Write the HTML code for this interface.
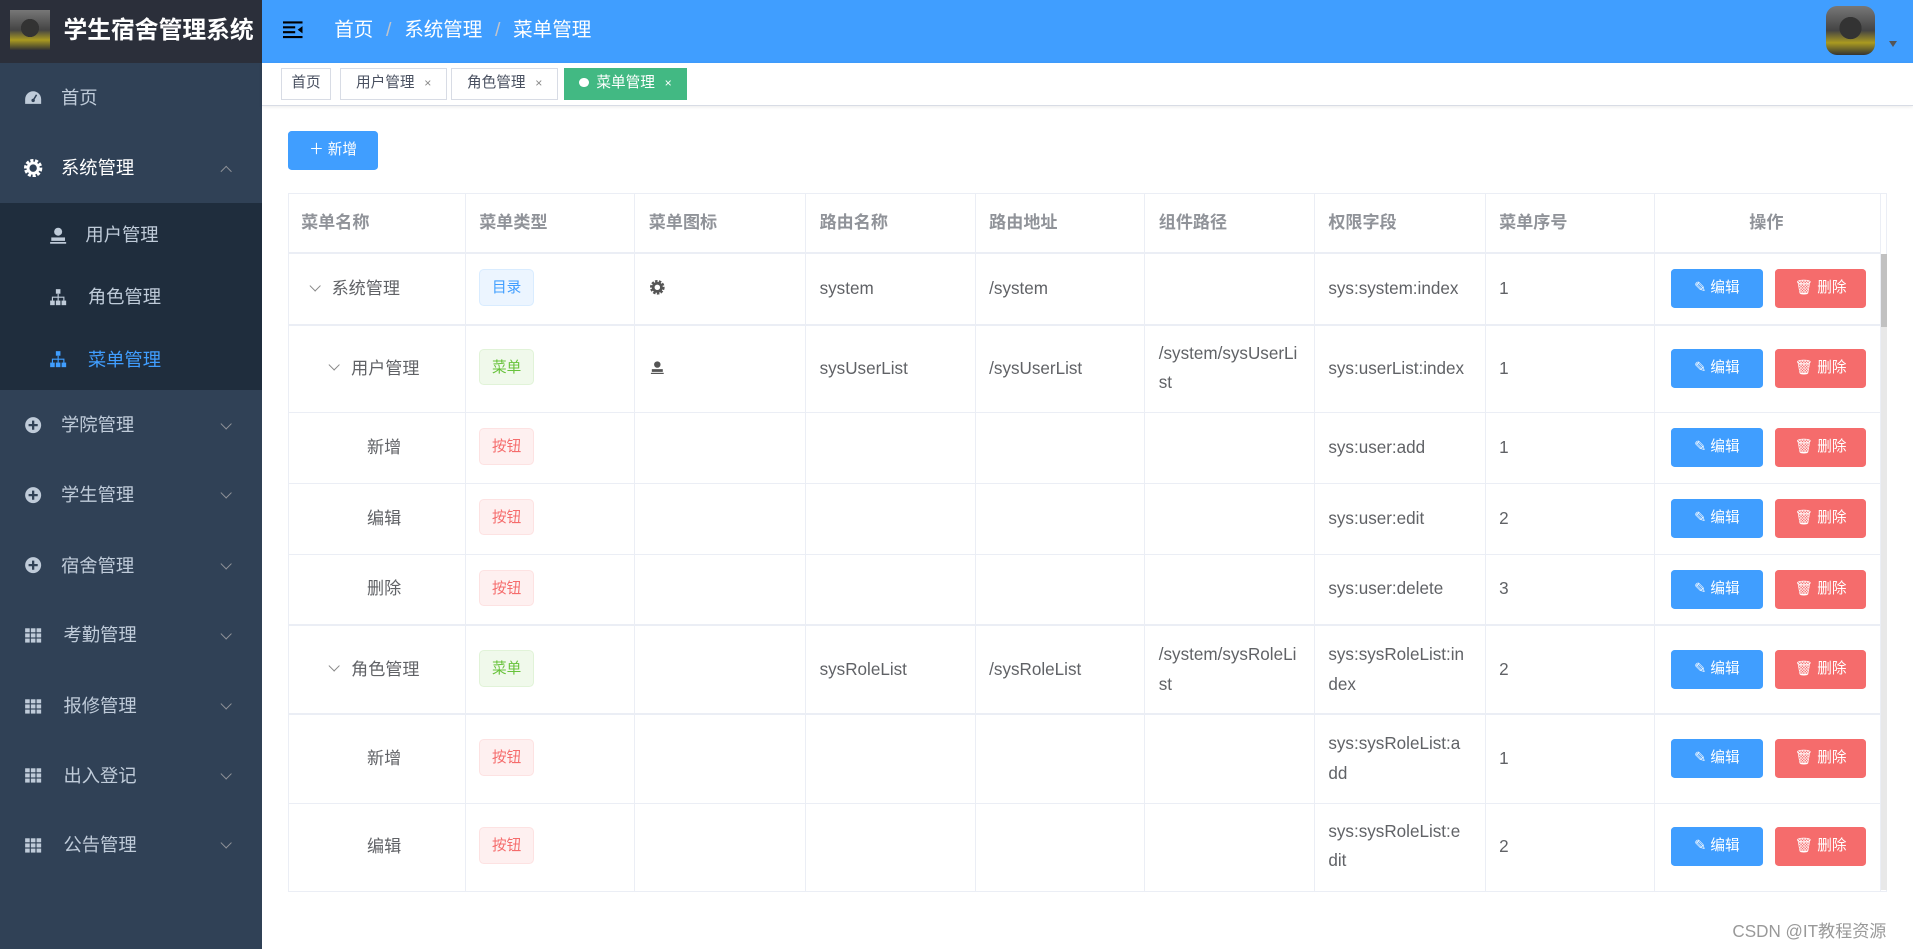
<!DOCTYPE html>
<html><head><meta charset="utf-8"><style>
html,body{margin:0;padding:0;overflow:hidden;background:#fff}
body{zoom:1.22;width:1568px;height:778px;position:relative;font-family:"Liberation Sans","Noto Sans CJK SC",sans-serif;font-size:14px;color:#606266}
.abs{position:absolute}
.side{left:0;top:0;width:215px;height:778px;background:#304156}
.logo{left:0;top:0;width:215px;height:52px;background:#2b2f3a}
.img{background:radial-gradient(circle at 50% 45%,#333 0 30%,transparent 31%),linear-gradient(180deg,#777 0%,#444 50%,#aa9a20 75%,#333 100%)}
.mi{position:absolute;left:0;width:215px;height:57px;line-height:57px;color:#bfcbd9;font-size:15px}
.mi .t{position:absolute;left:50px}
.mi .ic{position:absolute;left:20px;top:21px;width:15px;height:15px}
.mi .ar{position:absolute;left:182px;top:24px;width:6px;height:6px;border-right:1px solid #909399;border-bottom:1px solid #909399;transform:rotate(45deg)}
.sub{left:0;top:166px;width:215px;height:154px;background:#1f2d3d}
.top{left:215px;top:0;width:1353px;height:52px;background:#409eff;color:#fff;font-size:16px}
.tag{position:absolute;top:56px;height:24px;line-height:24px;border:1px solid #d8dce5;font-size:12px;color:#495060;padding:0 12px;box-sizing:content-box}
.tag .x{font-size:10px;color:#888;margin-left:8px}
.tbl{left:236px;top:158px;width:1311px;height:573px;border:1px solid #ebeef5;box-sizing:border-box}
.hl{position:absolute;left:0;width:1305px;height:1px;background:#ebeef5}
.vl{position:absolute;top:0;width:1px;height:572px;background:#ebeef5}
.c{position:absolute;line-height:24px}
.h{font-weight:bold;color:#909399}
.pill{position:absolute;left:156px;width:45px;height:30px;line-height:30px;text-align:center;font-size:12px;border-radius:4px;box-sizing:border-box}
.pb{background:#ecf5ff;border:1px solid #d9ecff;color:#409eff}
.pg{background:#f0f9eb;border:1px solid #e1f3d8;color:#67c23a}
.pr{background:#fef0f0;border:1px solid #fde2e2;color:#f56c6c}
.be,.bd{position:absolute;width:75px;height:32px;line-height:32px;border-radius:3px;color:#fff;font-size:12px;text-align:center}
.be{left:1133px;background:#409eff}
.bd{left:1218px;background:#f56c6c}
.tr{position:absolute;width:6px;height:6px;border-right:1px solid #888;border-bottom:1px solid #888;transform:rotate(45deg)}
</style></head><body>
<div class="abs side"></div>
<div class="abs logo"></div>
<div class="abs img" style="left:8px;top:8px;width:33px;height:33px"></div>
<div class="abs" style="left:52px;top:12px;color:#fff;font-size:19.5px;font-weight:bold;line-height:26px">学生宿舍管理系统</div>
<div class="abs sub"></div>

<div class="mi" style="top:52px"><svg class="ic" viewBox="0 0 16 16"><path d="M8 2A7 7 0 0 0 1 9v4h14V9A7 7 0 0 0 8 2z" fill="#bfcbd9"/><circle cx="8" cy="10" r="1.5" fill="#304156"/><path d="M8 10 11 5" stroke="#304156" stroke-width="1.3"/></svg><span class="t">首页</span></div>
<div class="mi" style="top:109px;color:#fff"><svg class="ic" viewBox="0 0 16 16"><circle cx="8" cy="8" r="6" fill="none" stroke="#fff" stroke-width="4" stroke-dasharray="2.4 1.3"/><circle cx="8" cy="8" r="4.5" fill="none" stroke="#fff" stroke-width="2.5"/></svg><span class="t">系统管理</span><span class="ar" style="transform:rotate(225deg);top:28px"></span></div>
<div class="mi" style="top:164px"><svg class="ic" style="left:40px" viewBox="0 0 16 16"><circle cx="8" cy="5" r="3.5" fill="#bfcbd9"/><rect x="2" y="10" width="12" height="3" fill="#bfcbd9"/><rect x="1" y="14" width="14" height="1.5" fill="#bfcbd9"/></svg><span class="t" style="left:70px">用户管理</span></div>
<div class="mi" style="top:215px"><svg class="ic" style="left:40px" viewBox="0 0 16 16" fill="#bfcbd9"><rect x="6" y="1" width="4" height="4"/><rect x="1" y="11" width="4" height="4"/><rect x="6" y="11" width="4" height="4"/><rect x="11" y="11" width="4" height="4"/><path d="M8 5v6M3 11V8h10v3" stroke="#bfcbd9" fill="none"/></svg><span class="t" style="left:72px">角色管理</span></div>
<div class="mi" style="top:266px;color:#409eff"><svg class="ic" style="left:40px" viewBox="0 0 16 16" fill="#409eff"><rect x="6" y="1" width="4" height="4"/><rect x="1" y="11" width="4" height="4"/><rect x="6" y="11" width="4" height="4"/><rect x="11" y="11" width="4" height="4"/><path d="M8 5v6M3 11V8h10v3" stroke="#409eff" fill="none"/></svg><span class="t" style="left:72px">菜单管理</span></div>

<div class="mi" style="top:320px"><svg class="ic" viewBox="0 0 16 16"><circle cx="8" cy="8" r="7" fill="#bfcbd9"/><path d="M4 8h8M8 4v8" stroke="#304156" stroke-width="2"/></svg><span class="t">学院管理</span><span class="ar"></span></div>
<div class="mi" style="top:377px"><svg class="ic" viewBox="0 0 16 16"><circle cx="8" cy="8" r="7" fill="#bfcbd9"/><path d="M4 8h8M8 4v8" stroke="#304156" stroke-width="2"/></svg><span class="t">学生管理</span><span class="ar"></span></div>
<div class="mi" style="top:435px"><svg class="ic" viewBox="0 0 16 16"><circle cx="8" cy="8" r="7" fill="#bfcbd9"/><path d="M4 8h8M8 4v8" stroke="#304156" stroke-width="2"/></svg><span class="t">宿舍管理</span><span class="ar"></span></div>
<div class="mi" style="top:492px"><svg class="ic" viewBox="0 0 16 16" fill="#bfcbd9"><rect x="1" y="2" width="4" height="3.5"/><rect x="6" y="2" width="4" height="3.5"/><rect x="11" y="2" width="4" height="3.5"/><rect x="1" y="6.5" width="4" height="3.5"/><rect x="6" y="6.5" width="4" height="3.5"/><rect x="11" y="6.5" width="4" height="3.5"/><rect x="1" y="11" width="4" height="3.5"/><rect x="6" y="11" width="4" height="3.5"/><rect x="11" y="11" width="4" height="3.5"/></svg><span class="t" style="left:52px">考勤管理</span><span class="ar"></span></div>
<div class="mi" style="top:550px"><svg class="ic" viewBox="0 0 16 16" fill="#bfcbd9"><rect x="1" y="2" width="4" height="3.5"/><rect x="6" y="2" width="4" height="3.5"/><rect x="11" y="2" width="4" height="3.5"/><rect x="1" y="6.5" width="4" height="3.5"/><rect x="6" y="6.5" width="4" height="3.5"/><rect x="11" y="6.5" width="4" height="3.5"/><rect x="1" y="11" width="4" height="3.5"/><rect x="6" y="11" width="4" height="3.5"/><rect x="11" y="11" width="4" height="3.5"/></svg><span class="t" style="left:52px">报修管理</span><span class="ar"></span></div>
<div class="mi" style="top:607px"><svg class="ic" viewBox="0 0 16 16" fill="#bfcbd9"><rect x="1" y="2" width="4" height="3.5"/><rect x="6" y="2" width="4" height="3.5"/><rect x="11" y="2" width="4" height="3.5"/><rect x="1" y="6.5" width="4" height="3.5"/><rect x="6" y="6.5" width="4" height="3.5"/><rect x="11" y="6.5" width="4" height="3.5"/><rect x="1" y="11" width="4" height="3.5"/><rect x="6" y="11" width="4" height="3.5"/><rect x="11" y="11" width="4" height="3.5"/></svg><span class="t" style="left:52px">出入登记</span><span class="ar"></span></div>
<div class="mi" style="top:664px"><svg class="ic" viewBox="0 0 16 16" fill="#bfcbd9"><rect x="1" y="2" width="4" height="3.5"/><rect x="6" y="2" width="4" height="3.5"/><rect x="11" y="2" width="4" height="3.5"/><rect x="1" y="6.5" width="4" height="3.5"/><rect x="6" y="6.5" width="4" height="3.5"/><rect x="11" y="6.5" width="4" height="3.5"/><rect x="1" y="11" width="4" height="3.5"/><rect x="6" y="11" width="4" height="3.5"/><rect x="11" y="11" width="4" height="3.5"/></svg><span class="t" style="left:52px">公告管理</span><span class="ar"></span></div>

<div class="abs top">
<svg class="abs" style="left:17px;top:16px" width="17" height="16" viewBox="0 0 17 16"><path d="M0 2h16M0 6h10M0 10h10M0 14h16" stroke="#000" stroke-width="1.8"/><path d="M16 5v6l-4-3z" fill="#000"/></svg>
<div class="abs" style="left:59px;top:15px;line-height:20px">首页 <span style="color:#c0c4cc;margin:0 6px">/</span> 系统管理 <span style="color:#c0c4cc;margin:0 6px">/</span> 菜单管理</div>
<div class="abs img" style="left:1282px;top:5px;width:40px;height:40px;border-radius:9px"></div>
<div class="abs" style="left:1333px;top:34px;width:0;height:0;border-left:4px solid transparent;border-right:4px solid transparent;border-top:5px solid #555"></div>
</div>
<div class="abs" style="left:215px;top:52px;width:1353px;height:34px;border-bottom:1px solid #d8dce5;box-shadow:0 1px 3px rgba(0,0,0,.08)"></div>
<div class="tag" style="left:230px;padding:0 8px">首页</div>
<div class="tag" style="left:279px">用户管理<span class="x">×</span></div>
<div class="tag" style="left:370px">角色管理<span class="x">×</span></div>
<div class="tag" style="left:462px;background:#42b983;border-color:#42b983;color:#fff"><span style="display:inline-block;width:8px;height:8px;border-radius:50%;background:#fff;margin-right:6px"></span>菜单管理<span class="x" style="color:#fff">×</span></div>

<div class="abs" style="left:236px;top:107px;width:74px;height:32px;line-height:32px;background:#409eff;border-radius:3px;color:#fff;font-size:12px;text-align:center">＋ 新增</div>

<div class="abs tbl">
<div class="vl" style="left:144px"></div><div class="vl" style="left:283px"></div><div class="vl" style="left:423px"></div><div class="vl" style="left:562px"></div><div class="vl" style="left:701px"></div><div class="vl" style="left:840px"></div><div class="vl" style="left:980px"></div><div class="vl" style="left:1119px"></div><div class="vl" style="left:1304px"></div>
<div class="hl" style="top:48px"></div><div class="hl" style="top:107px"></div><div class="hl" style="top:179px"></div><div class="hl" style="top:237px"></div><div class="hl" style="top:295px"></div><div class="hl" style="top:353px"></div><div class="hl" style="top:426px"></div><div class="hl" style="top:499px"></div>
<div class="abs" style="left:1305px;top:49px;width:5px;height:522px;background:#e8e8e8"></div>
<div class="abs" style="left:1305px;top:49px;width:5px;height:60px;background:#c1c1c1"></div>
<div class="c h" style="top:12px;left:10px">菜单名称</div><div class="c h" style="top:12px;left:156px">菜单类型</div><div class="c h" style="top:12px;left:295px">菜单图标</div><div class="c h" style="top:12px;left:435px">路由名称</div><div class="c h" style="top:12px;left:574px">路由地址</div><div class="c h" style="top:12px;left:713px">组件路径</div><div class="c h" style="top:12px;left:852px">权限字段</div><div class="c h" style="top:12px;left:992px">菜单序号</div><div class="c h" style="top:12px;left:1197px">操作</div>

<span class="tr" style="left:18px;top:72px"></span><div class="c" style="top:66px;left:35px">系统管理</div>
<div class="pill pb" style="top:62px">目录</div>
<svg class="abs" style="left:296px;top:71px" width="12" height="12" viewBox="0 0 16 16"><circle cx="8" cy="8" r="6" fill="none" stroke="#555" stroke-width="4" stroke-dasharray="2.4 1.3"/><circle cx="8" cy="8" r="4.5" fill="none" stroke="#555" stroke-width="3"/></svg>
<div class="c" style="top:66px;left:435px">system</div><div class="c" style="top:66px;left:574px">/system</div><div class="c" style="top:66px;left:852px">sys:system:index</div><div class="c" style="top:66px;left:992px">1</div>
<div class="be" style="top:62px">✎ 编辑</div><div class="bd" style="top:62px">🗑 删除</div>
<span class="tr" style="left:34px;top:137px"></span><div class="c" style="top:131px;left:51px">用户管理</div>
<div class="pill pg" style="top:127px">菜单</div>
<svg class="abs" style="left:296px;top:136px" width="12" height="12" viewBox="0 0 16 16" fill="#555"><circle cx="8" cy="5" r="3.5"/><rect x="2" y="10" width="12" height="3"/><rect x="1" y="14" width="14" height="1.5"/></svg>
<div class="c" style="top:131px;left:435px">sysUserList</div><div class="c" style="top:131px;left:574px">/sysUserList</div><div class="c" style="top:119px;left:713px">/system/sysUserLi<br>st</div><div class="c" style="top:131px;left:852px">sys:userList:index</div><div class="c" style="top:131px;left:992px">1</div>
<div class="be" style="top:127px">✎ 编辑</div><div class="bd" style="top:127px">🗑 删除</div>
<div class="c" style="top:196px;left:64px">新增</div><div class="pill pr" style="top:192px">按钮</div><div class="c" style="top:196px;left:852px">sys:user:add</div><div class="c" style="top:196px;left:992px">1</div>
<div class="be" style="top:192px">✎ 编辑</div><div class="bd" style="top:192px">🗑 删除</div>
<div class="c" style="top:254px;left:64px">编辑</div><div class="pill pr" style="top:250px">按钮</div><div class="c" style="top:254px;left:852px">sys:user:edit</div><div class="c" style="top:254px;left:992px">2</div>
<div class="be" style="top:250px">✎ 编辑</div><div class="bd" style="top:250px">🗑 删除</div>
<div class="c" style="top:312px;left:64px">删除</div><div class="pill pr" style="top:308px">按钮</div><div class="c" style="top:312px;left:852px">sys:user:delete</div><div class="c" style="top:312px;left:992px">3</div>
<div class="be" style="top:308px">✎ 编辑</div><div class="bd" style="top:308px">🗑 删除</div>
<span class="tr" style="left:34px;top:384px"></span><div class="c" style="top:378px;left:51px">角色管理</div>
<div class="pill pg" style="top:374px">菜单</div>
<div class="c" style="top:378px;left:435px">sysRoleList</div><div class="c" style="top:378px;left:574px">/sysRoleList</div><div class="c" style="top:366px;left:713px">/system/sysRoleLi<br>st</div><div class="c" style="top:366px;left:852px">sys:sysRoleList:in<br>dex</div><div class="c" style="top:378px;left:992px">2</div>
<div class="be" style="top:374px">✎ 编辑</div><div class="bd" style="top:374px">🗑 删除</div>
<div class="c" style="top:451px;left:64px">新增</div><div class="pill pr" style="top:447px">按钮</div><div class="c" style="top:439px;left:852px">sys:sysRoleList:a<br>dd</div><div class="c" style="top:451px;left:992px">1</div>
<div class="be" style="top:447px">✎ 编辑</div><div class="bd" style="top:447px">🗑 删除</div>
<div class="c" style="top:523px;left:64px">编辑</div><div class="pill pr" style="top:519px">按钮</div><div class="c" style="top:511px;left:852px">sys:sysRoleList:e<br>dit</div><div class="c" style="top:523px;left:992px">2</div>
<div class="be" style="top:519px">✎ 编辑</div><div class="bd" style="top:519px">🗑 删除</div>
</div>
<div class="abs" style="left:1420px;top:752px;color:#999;font-size:14px">CSDN @IT教程资源</div>
</body></html>
